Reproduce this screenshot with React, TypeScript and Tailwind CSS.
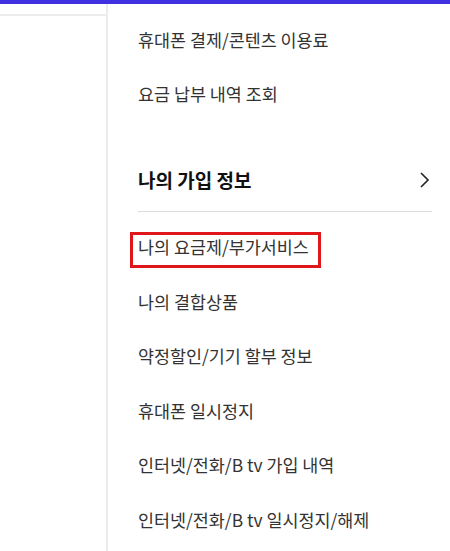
import React from "react";

const items1 = ["휴대폰 결제/콘텐츠 이용료", "요금 납부 내역 조회"];
const items2 = [
  "나의 요금제/부가서비스",
  "나의 결합상품",
  "약정할인/기기 할부 정보",
  "휴대폰 일시정지",
  "인터넷/전화/B tv 가입 내역",
  "인터넷/전화/B tv 일시정지/해제",
];

export default function App() {
  return (
    <div
      className="w-[450px] h-[551px] overflow-hidden bg-white text-[#333]"
      style={{ fontFamily: '"Noto Sans CJK KR", "Noto Sans", sans-serif' }}
    >
      <div className="h-[4px] bg-[#3f30e0]" />
      <div className="flex h-[547px]">
        <div className="w-[108px] shrink-0 border-r-2 border-[#ececec]">
          <div className="h-[12px] border-b-2 border-[#ececec]" />
        </div>
        <div className="flex-1 pl-[30px] pr-[18px] pt-[9px]">
          {items1.map((t) => (
            <div key={t} className="h-[54px] flex items-center text-[17.4px]">
              {t}
            </div>
          ))}
          <div className="mt-[34px] h-[50px] flex items-center justify-between">
            <span className="text-[19px] font-bold text-[#111]">나의 가입 정보</span>
            <svg width="12" height="18" viewBox="0 0 12 18" className="mr-[2px]">
              <path d="M3 2 L10 9 L3 16" fill="none" stroke="#222" strokeWidth="1.6" />
            </svg>
          </div>
          <div className="mt-[6px] h-px bg-[#dcdcdc]" />
          <div className="pt-[8px]">
            {items2.map((t, i) => (
              <div key={t} className="relative h-[54.5px] flex items-center text-[17.4px] whitespace-nowrap">
                {i === 0 && (
                  <span className="absolute left-[-8px] top-[12px] w-[191px] h-[36px] border-[3px] border-[#e0161b]" />
                )}
                {t}
              </div>
            ))}
          </div>
        </div>
      </div>
    </div>
  );
}
